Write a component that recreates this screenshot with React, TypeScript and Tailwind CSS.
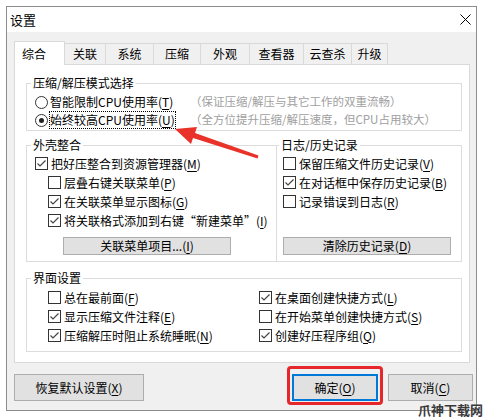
import type { ReactNode } from 'react';

const font = { fontFamily: '"Noto Sans CJK SC", "Liberation Sans", sans-serif' };

function Key({ k }: { k: string }) {
  return (
    <>
      (<span className="underline underline-offset-2">{k}</span>)
    </>
  );
}

function Check({ checked, children }: { checked?: boolean; children: ReactNode }) {
  return (
    <div className="flex items-center gap-[3px] h-[19px] whitespace-nowrap">
      <span className="w-[13px] h-[13px] border border-[#333] bg-white flex items-center justify-center shrink-0">
        {checked && (
          <svg width="11" height="11" viewBox="0 0 11 11">
            <polyline points="1.5,5.5 4,8 9.5,2.5" fill="none" stroke="#444" strokeWidth="1.2" />
          </svg>
        )}
      </span>
      <span>{children}</span>
    </div>
  );
}

function Group({ title, className, children }: { title: string; className?: string; children: ReactNode }) {
  return (
    <fieldset className={`border border-[#dcdcdc] px-[8px] ${className ?? ''}`}>
      <legend className="-ml-[4px] px-[2px] leading-[16px]">{title}</legend>
      {children}
    </fieldset>
  );
}

function Btn({ children, className }: { children: ReactNode; className?: string }) {
  return (
    <div className={`h-[18px] bg-[#e1e1e1] border border-[#adadad] flex items-center justify-center ${className ?? ''}`}>
      {children}
    </div>
  );
}

const tabs = [
  { name: '关联', w: 'w-[42px]' },
  { name: '系统', w: 'w-[49px]' },
  { name: '压缩', w: 'w-[48px]' },
  { name: '外观', w: 'w-[50px]' },
  { name: '查看器', w: 'w-[55px]' },
  { name: '云查杀', w: 'w-[49px]' },
  { name: '升级', w: 'w-[37px]' },
];

export default function App() {
  return (
    <div className="relative w-[484px] h-[419px] bg-white overflow-hidden text-[12px] text-black" style={font}>
      <div className="ml-[6px] mt-[6px] w-[471px] h-[405px] border border-[#8c8c8c] flex flex-col bg-[#f0f0f0]">
        {/* title bar */}
        <div className="h-[25px] bg-white flex items-center justify-between pl-[3px] pr-[5px] shrink-0">
          <span className="text-[13px]">设置</span>
          <svg width="11" height="11" viewBox="0 0 11 11">
            <path d="M0.5 0.5 L10.5 10.5 M10.5 0.5 L0.5 10.5" stroke="#000" strokeWidth="1" />
          </svg>
        </div>

        <div className="flex-1 pl-[7px] pr-[6px] pt-[9px]">
          {/* tabs */}
          <div className="flex items-start h-[23px]">
            <div className="relative z-10 w-[51px] h-[24px] bg-white border border-b-0 border-[#d9d9d9] pl-[7px] pt-[3px]">
              综合
            </div>
            {tabs.map(t => (
              <div
                key={t.name}
                className={`${t.w} -ml-px mt-[2px] h-[21px] border border-b-0 border-[#d9d9d9] flex items-center justify-center first:ml-0`}
              >
                {t.name}
              </div>
            ))}
          </div>

          {/* panel */}
          <div className="h-[299px] bg-white border border-[#d9d9d9] pl-[11px] pr-[7px] pt-[10px]">
            <Group title="压缩/解压模式选择" className="pb-[1px]">
              <div className="pt-[2px]">
                <div className="flex items-center h-[18px] whitespace-nowrap">
                  <span className="w-[155px] flex items-center gap-[2px]">
                    <span className="w-[13px] h-[13px] rounded-full border border-[#333] bg-white shrink-0" />
                    <span>智能限制CPU使用率<Key k="T" /></span>
                  </span>
                  <span className="text-[11.5px] text-[#a0a0a0]">（保证压缩/解压与其它工作的双重流畅）</span>
                </div>
                <div className="flex items-center h-[18px] whitespace-nowrap">
                  <span className="w-[155px] flex items-center gap-[2px]">
                    <span className="w-[13px] h-[13px] rounded-full border border-[#333] bg-white shrink-0 flex items-center justify-center">
                      <span className="w-[5px] h-[5px] rounded-full bg-[#222]" />
                    </span>
                    <span className="outline outline-1 outline-dotted outline-black leading-[16px]">
                      始终较高CPU使用率<Key k="U" />
                    </span>
                  </span>
                  <span className="text-[11.5px] text-[#a0a0a0]">（全方位提升压缩/解压速度，但CPU占用较大）</span>
                </div>
              </div>
            </Group>

            <div className="grid grid-cols-[243px_1fr] gap-x-[7px] mt-[6px]">
              <Group title="外壳整合" className="pb-[6px]">
                <div className="pt-[1px]">
                  <Check checked>把好压整合到资源管理器<Key k="M" /></Check>
                  <div className="pl-[13px]">
                    <Check>层叠右键关联菜单<Key k="P" /></Check>
                    <Check checked>在关联菜单显示图标<Key k="G" /></Check>
                    <Check checked>将关联格式添加到右键“新建菜单”<Key k="I" /></Check>
                  </div>
                  <Btn className="mt-[7px] ml-[28px] w-[168px]">关联菜单项目...<Key k="I" /></Btn>
                </div>
              </Group>
              <Group title="日志/历史记录" className="!pl-[6px] pb-[6px]">
                <div className="pt-[1px]">
                  <Check>保留压缩文件历史记录<Key k="V" /></Check>
                  <Check checked>在对话框中保存历史记录<Key k="B" /></Check>
                  <Check>记录错误到日志<Key k="R" /></Check>
                  <Btn className="mt-[26px] w-[168px]">清除历史记录<Key k="D" /></Btn>
                </div>
              </Group>
            </div>

            <Group title="界面设置" className="mt-[8px] pb-[6px]">
              <div className="pt-[2px] pl-[13px] grid grid-cols-[211px_1fr]">
                <Check>总在最前面<Key k="F" /></Check>
                <Check checked>在桌面创建快捷方式<Key k="L" /></Check>
                <Check checked>显示压缩文件注释<Key k="E" /></Check>
                <Check>在开始菜单创建快捷方式<Key k="S" /></Check>
                <Check checked>压缩解压时阻止系统睡眠<Key k="N" /></Check>
                <Check checked>创建好压程序组<Key k="Q" /></Check>
              </div>
            </Group>
          </div>

          {/* bottom buttons */}
          <div className="flex items-center mt-[11px] -mr-[3px] h-[27px]">
            <div className="w-[130px] h-[27px] bg-[#e1e1e1] border border-[#adadad] flex items-center justify-center">
              恢复默认设置<Key k="X" />
            </div>
            <div className="ml-auto w-[86px] h-[27px] bg-[#e1e1e1] border-2 border-[#0078d7] flex items-center justify-center">
              确定<Key k="O" />
            </div>
            <div className="ml-[10px] w-[85px] h-[27px] bg-[#e1e1e1] border border-[#adadad] flex items-center justify-center">
              取消<Key k="C" />
            </div>
          </div>
        </div>
      </div>

      {/* annotations */}
      <div className="absolute left-[287px] top-[366px] w-[96px] h-[39px] border-[3px] border-[#e5262b] rounded-[4px]" />
      <svg className="absolute left-0 top-0" width="484" height="419" viewBox="0 0 484 419">
        <polygon points="175,129 197,127 195,133 258.5,155.6 257.5,158.4 193,138 191,144" fill="#e8322a" />
      </svg>
      <div className="absolute right-[1px] top-[403px] text-[13px] font-bold text-[#3a3a3a] leading-[14px]">爪神下载网</div>
    </div>
  );
}
